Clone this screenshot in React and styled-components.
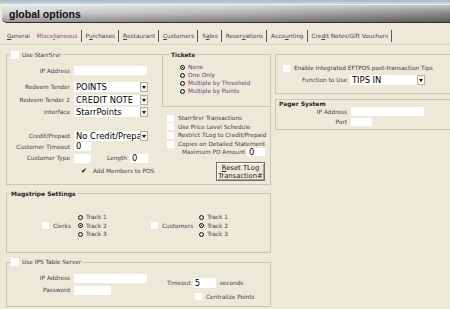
import React from "react";
import styled, { createGlobalStyle } from "styled-components";

const GlobalStyle = createGlobalStyle`
  html, body { margin: 0; padding: 0; background: #ece9d8; }
  #root { width: 450px; height: 309px; overflow: hidden; }
  * { box-sizing: border-box; }
`;

const Page = styled.div`
  width: 450px;
  height: 309px;
  overflow: hidden;
  background: #ece9d8;
  font-family: "DejaVu Sans", Verdana, sans-serif;
  font-size: 5.8px;
  color: #4a3e4f;
  display: flex;
  flex-direction: column;
`;

const TopStrip = styled.div`
  height: 4px;
  background: linear-gradient(#a9b7c6, #cdd6df);
`;

const TitleBar = styled.div`
  height: 19px;
  margin-left: 2px;
  border-top: 1px solid #eef1f4;
  border-bottom: 1px solid #2e2e2e;
  border-radius: 5px 0 0 5px;
  background: linear-gradient(
      to bottom,
      rgba(255, 255, 255, 0.55) 0%,
      rgba(255, 255, 255, 0.1) 45%,
      rgba(0, 0, 0, 0.28) 100%
    ),
    linear-gradient(to right, #d2d2d2 0%, #acacac 55%, #7e7e7e 100%);
  display: flex;
  align-items: center;
  padding-left: 7px;
  font: bold 10.5px "Liberation Sans", Arial, sans-serif;
  color: #111;
`;

const TabBar = styled.div`
  margin-top: 5px;
  height: 17px;
  display: flex;
  align-items: center;
  padding-left: 4px;
  border-bottom: 1px solid #d4d0be;
`;

const Tab = styled.div`
  height: 12px;
  display: flex;
  align-items: center;
  padding: 0 3px 0 ${(p) => (p.$first ? 3 : 4)}px;
  border-right: ${(p) => (p.$first ? "none" : "1px solid #5a5a5a")};
  color: ${(p) => (p.$active ? "#8d4b8d" : "#44445a")};
  white-space: nowrap;
`;

const Content = styled.div`
  display: flex;
  align-items: flex-start;
  padding-left: 6px;
`;

const LeftCol = styled.div`
  width: 265px;
  margin-top: 5px;
  display: flex;
  flex-direction: column;
`;

const RightCol = styled.div`
  flex: 1;
  margin-left: 4px;
  margin-top: 9px;
  display: flex;
  flex-direction: column;
`;

const Fieldset = styled.fieldset`
  margin: ${(p) => p.$margin || "0"};
  padding: 0;
  min-width: 0;
  border: 1px solid #cac6b3;
`;

const Legend = styled.legend`
  display: flex;
  align-items: center;
  gap: 3px;
  height: 9px;
  margin-left: ${(p) => p.$indent ?? 3}px;
  padding: 0 1px;
  font-weight: ${(p) => (p.$bold ? 700 : 400)};
  font-size: ${(p) => (p.$bold ? "6px" : "5.8px")};
  color: ${(p) => (p.$bold ? "#1e1e1e" : "#3b3b3b")};
  background: #ece9d8;
`;

const Split = styled.div`
  display: flex;
  align-items: flex-start;
`;

const FormCol = styled.div`
  width: ${(p) => p.$w}px;
  padding-top: ${(p) => p.$pt || 0}px;
  margin-left: ${(p) => p.$ml || 0}px;
  flex-shrink: 0;
  display: flex;
  flex-direction: column;
`;

const MidCol = styled.div`
  flex: 1;
  display: flex;
  flex-direction: column;
  padding-bottom: 3px;
`;

const Row = styled.div`
  display: flex;
  align-items: center;
  height: ${(p) => p.$h}px;
  margin-top: ${(p) => p.$mt || 0}px;
  padding-left: ${(p) => p.$pl || 0}px;
  flex-shrink: 0;
`;

const FieldLabel = styled.span`
  width: ${(p) => p.$w}px;
  margin-right: ${(p) => p.$gap ?? 4}px;
  text-align: right;
  white-space: nowrap;
  flex-shrink: 0;
`;

const Text = styled.span`
  margin-left: ${(p) => p.$ml || 0}px;
  margin-right: ${(p) => p.$mr || 0}px;
  white-space: nowrap;
  color: ${(p) => p.$color || "inherit"};
`;

const Input = styled.div`
  width: ${(p) => p.$w}px;
  height: ${(p) => p.$h || 9}px;
  background: #fff;
  font-size: 8.4px;
  line-height: ${(p) => p.$h || 9}px;
  padding-left: 2px;
  color: #000;
  flex-shrink: 0;
`;

const Select = styled.div`
  width: ${(p) => p.$w}px;
  height: 10px;
  display: flex;
  flex-shrink: 0;
`;

const SelectValue = styled.div`
  flex: 1;
  background: #fff;
  font-size: 8.4px;
  line-height: 10px;
  padding-left: 2px;
  color: #000;
  overflow: hidden;
  white-space: nowrap;
`;

const DropBtn = styled.div`
  width: 8px;
  height: 10px;
  background: #f6f5f0;
  border: 1px solid #b5b1a0;
  display: flex;
  align-items: center;
  justify-content: center;

  &::after {
    content: "";
    border-top: 3px solid #111;
    border-left: 2px solid transparent;
    border-right: 2px solid transparent;
  }
`;

const Checkbox = styled.div`
  width: ${(p) => p.$s || 7}px;
  height: ${(p) => p.$s || 7}px;
  background: #fff;
  flex-shrink: 0;
`;

const Tick = styled.span`
  font-size: 7px;
  color: #000;
  width: 8px;
  margin-left: 74px;
`;

const Radio = styled.div`
  width: 5px;
  height: 5px;
  border-radius: 50%;
  border: 1.2px solid #111;
  flex-shrink: 0;
  background: ${(p) =>
    p.$on ? "radial-gradient(circle, #111 0 35%, transparent 45%)" : "transparent"};
`;

const RadioList = styled.div`
  display: flex;
  flex-direction: column;
  padding: ${(p) => p.$pad || "0"};
`;

const RadioRow = styled.div`
  display: flex;
  align-items: center;
  height: ${(p) => p.$h || 8}px;
  color: ${(p) => p.$color || "inherit"};
`;

const CheckList = styled.div`
  display: flex;
  flex-direction: column;
  gap: 0.7px;
  margin-top: 7px;
  padding-left: 5px;
  color: #3f3f3f;
`;

const ResetButton = styled.div`
  align-self: flex-end;
  margin: 6px 5px 0 0;
  width: 49px;
  height: 19px;
  border: 1px solid #6f6f6f;
  box-shadow: inset 1px 1px #ffffff, inset -1px -1px #a6a291;
  display: flex;
  flex-direction: column;
  align-items: center;
  justify-content: center;
  font-size: 6.8px;
  line-height: 8px;
  color: #222;
`;

const MagRow = styled.div`
  display: flex;
  align-items: center;
  padding: 15px 0 13px 35px;
`;

const MagGroup = styled.div`
  width: 109px;
  display: flex;
  align-items: center;
  flex-shrink: 0;
`;

const Box = styled.div`
  border: 1px solid #cac6b3;
  border-right: none;
  margin-top: ${(p) => p.$mt || 0}px;
  padding: ${(p) => p.$pad || "0"};
  display: flex;
  flex-direction: column;
`;

const BoxHeading = styled.div`
  height: 7px;
  line-height: 7px;
  padding-left: 3px;
  font-weight: 700;
  font-size: 6px;
  color: #1e1e1e;
`;

const tabs = [
  [<><u>G</u>eneral</>, false],
  [<>Misce<u>l</u>laneous</>, true],
  [<>P<u>u</u>rchases</>, false],
  [<><u>R</u>estaurant</>, false],
  [<><u>C</u>ustomers</>, false],
  [<>S<u>a</u>les</>, false],
  [<>Reser<u>v</u>ations</>, false],
  [<>Acco<u>u</u>nting</>, false],
  [<>Cre<u>d</u>it Notes/Gift Vouchers</>, false],
];

const SelectBox = ({ w, value }) => (
  <Select $w={w}>
    <SelectValue>{value}</SelectValue>
    <DropBtn />
  </Select>
);

const Tracks = ({ selected }) => (
  <RadioList>
    {["Track 1", "Track 2", "Track 3"].map((t, i) => (
      <RadioRow key={t} $h={8.5} $color="#3f3f3f">
        <Radio $on={i === selected} />
        <Text $ml={3}>{t}</Text>
      </RadioRow>
    ))}
  </RadioList>
);

const App = () => {
  return (
    <Page>
      <GlobalStyle />
      <TopStrip />
      <TitleBar>global options</TitleBar>
      <TabBar>
        {tabs.map(([label, active], i) => (
          <Tab key={i} $first={i === 0} $active={active}>
            {label}
          </Tab>
        ))}
      </TabBar>

      <Content>
        <LeftCol>
          <Fieldset>
            <Legend>
              <Checkbox $s={8} />
              <span>Use StarrSrvr</span>
            </Legend>
            <Split>
              <FormCol $w={155} $pt={7}>
                <Row $h={9}>
                  <FieldLabel $w={63}>IP Address</FieldLabel>
                  <Input $w={73} />
                </Row>
                <Row $h={10} $mt={7}>
                  <FieldLabel $w={63}>Redeem Tender</FieldLabel>
                  <SelectBox w={74} value="POINTS" />
                </Row>
                <Row $h={10} $mt={3}>
                  <FieldLabel $w={63}>Redeem Tender 2</FieldLabel>
                  <SelectBox w={74} value="CREDIT NOTE" />
                </Row>
                <Row $h={10} $mt={2}>
                  <FieldLabel $w={63}>Interface</FieldLabel>
                  <SelectBox w={74} value="StarrPoints" />
                </Row>
                <Row $h={10} $mt={14}>
                  <FieldLabel $w={63}>Credit/Prepaid</FieldLabel>
                  <SelectBox w={74} value="No Credit/Prepa" />
                </Row>
                <Row $h={9} $mt={1}>
                  <FieldLabel $w={63}>Customer Timeout</FieldLabel>
                  <Input $w={17}>0</Input>
                </Row>
                <Row $h={10} $mt={2}>
                  <FieldLabel $w={63}>Customer Type</FieldLabel>
                  <Input $w={17} />
                  <Text $ml={16} $mr={3}>Length</Text>
                  <Input $w={18}>0</Input>
                </Row>
                <Row $h={7} $mt={4}>
                  <Tick>✔</Tick>
                  <Text $ml={4}>Add Members to POS</Text>
                </Row>
              </FormCol>

              <MidCol>
                <Fieldset $margin="-9px -1px 0 0">
                  <Legend $bold $indent={7}>Tickets</Legend>
                  <RadioList $pad="4px 0 11px 17px">
                    <RadioRow $color="#6a3d78">
                      <Radio $on />
                      <Text $ml={3}>None</Text>
                    </RadioRow>
                    <RadioRow $color="#6a3d78">
                      <Radio />
                      <Text $ml={3}>One Only</Text>
                    </RadioRow>
                    <RadioRow $color="#6a3d78">
                      <Radio />
                      <Text $ml={3}>Multiple by Threshold</Text>
                    </RadioRow>
                    <RadioRow $color="#6a3d78">
                      <Radio />
                      <Text $ml={3}>Multiple by Points</Text>
                    </RadioRow>
                  </RadioList>
                </Fieldset>

                <CheckList>
                  {[
                    "StarrSrvr Transactions",
                    "Use Price Level Schedule",
                    "Restrict TLog to Credit/Prepaid",
                    "Copies on Detailed Statement",
                  ].map((t) => (
                    <Row key={t} $h={8}>
                      <Checkbox />
                      <Text $ml={4}>{t}</Text>
                    </Row>
                  ))}
                </CheckList>
                <Row $h={8} $pl={20}>
                  <Text $mr={2}>Maximum PO Amount</Text>
                  <Input $w={18} $h={8}>0</Input>
                </Row>
                <ResetButton>
                  <span>
                    <u>R</u>eset TLog
                  </span>
                  <span>Transaction#</span>
                </ResetButton>
              </MidCol>
            </Split>
          </Fieldset>

          <Fieldset $margin="4px 0 0 0">
            <Legend $bold>Magstripe Settings</Legend>
            <MagRow>
              <MagGroup>
                <Checkbox />
                <Text $ml={4} $mr={7}>Clerks</Text>
                <Tracks selected={1} />
              </MagGroup>
              <MagGroup>
                <Checkbox />
                <Text $ml={4} $mr={6}>Customers</Text>
                <Tracks selected={1} />
              </MagGroup>
            </MagRow>
          </Fieldset>

          <Fieldset $margin="5px 0 0 0">
            <Legend>
              <Checkbox $s={8} />
              <span>Use IPS Table Server</span>
            </Legend>
            <Split>
              <FormCol $w={140} $pt={7}>
                <Row $h={9}>
                  <FieldLabel $w={63}>IP Address</FieldLabel>
                  <Input $w={73} />
                </Row>
                <Row $h={9} $mt={3}>
                  <FieldLabel $w={63}>Password</FieldLabel>
                  <Input $w={37} />
                </Row>
              </FormCol>
              <FormCol $w={110} $pt={11} $ml={20}>
                <Row $h={10}>
                  <Text $mr={2}>Timeout</Text>
                  <Input $w={23} $h={10}>5</Input>
                  <Text $ml={4}>seconds</Text>
                </Row>
                <Row $h={8} $mt={5} $pl={28}>
                  <Checkbox />
                  <Text $ml={4}>Centralize Points</Text>
                </Row>
                <Row $h={5} />
              </FormCol>
            </Split>
          </Fieldset>
        </LeftCol>

        <RightCol>
          <Box $pad="9px 0 8px 0">
            <Row $h={8} $pl={7}>
              <Checkbox />
              <Text $ml={4} $color="#3b3b3b">
                Enable Integrated EFTPOS post-transaction Tips
              </Text>
            </Row>
            <Row $h={10} $mt={3}>
              <FieldLabel $w={71} $gap={3}>Function to Use</FieldLabel>
              <SelectBox w={75} value="TIPS IN" />
            </Row>
          </Box>
          <Box $mt={5} $pad="0 0 3px 0">
            <BoxHeading>Pager System</BoxHeading>
            <Row $h={9}>
              <FieldLabel $w={71}>IP Address</FieldLabel>
              <Input $w={73} />
            </Row>
            <Row $h={8} $mt={2}>
              <FieldLabel $w={71}>Port</FieldLabel>
              <Input $w={21} $h={8} />
            </Row>
          </Box>
        </RightCol>
      </Content>
    </Page>
  );
};

export default App;
